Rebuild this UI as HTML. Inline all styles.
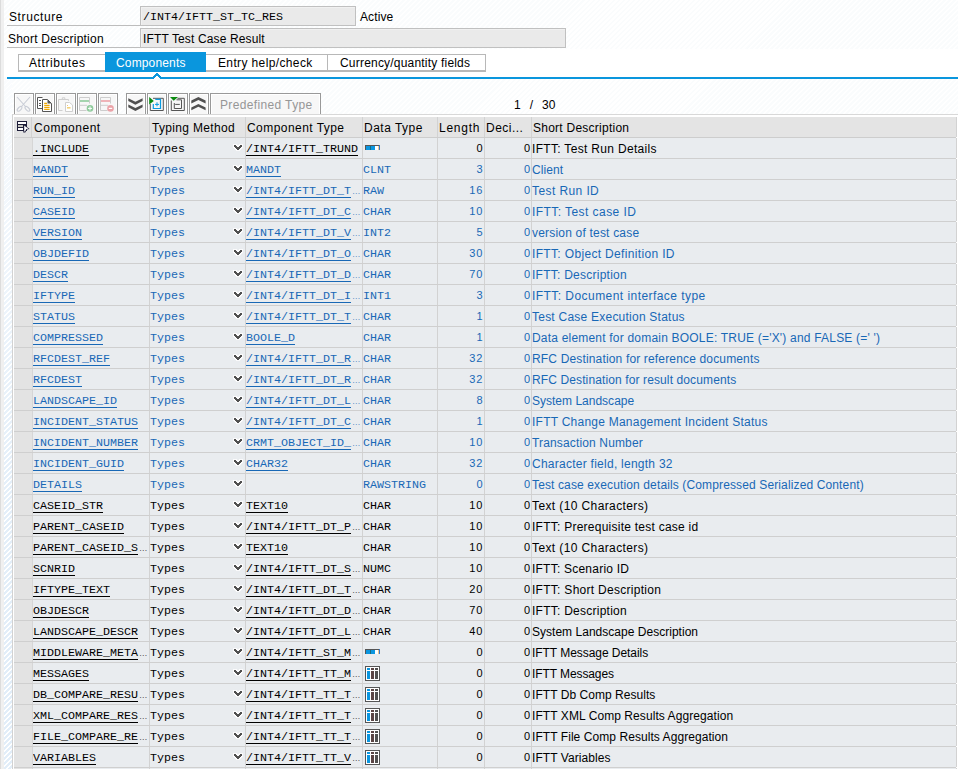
<!DOCTYPE html>
<html><head><meta charset="utf-8">
<style>
*{box-sizing:border-box;margin:0;padding:0}
html,body{width:958px;height:769px;overflow:hidden;background:#fff}
body{background:repeating-linear-gradient(135deg,#fff 0 1.6px,#fafcfd 1.6px 3.54px)}
.hatch{left:4px;top:80px;width:8px;height:689px;background:linear-gradient(to bottom,rgba(255,255,255,0.85) 0px,rgba(255,255,255,0.55) 120px,rgba(255,255,255,0.1) 400px,rgba(255,255,255,0) 600px),repeating-linear-gradient(135deg,#fff 0 1.3px,#e2eef9 1.3px 3.54px)}
body{position:relative;font-family:"Liberation Sans",sans-serif;font-size:12px;color:#000}
.a{position:absolute;white-space:nowrap}
.m{font-family:"Liberation Mono",monospace;font-size:11.67px}
.lstrip{left:0;top:0;width:1px;height:769px;background:#dcdcdc}
.lstrip2{left:1px;top:0;width:3px;height:769px;background:#f0f0f0}
.lbl{font-size:12px;letter-spacing:0.1px;line-height:20px}
.uline{height:1px;background:#bdbdbd}
.inp{background:#eaeaea;border:1px solid #c0c0c0;box-shadow:inset 1px 1px 0 #f1f1f1;line-height:18px;padding-left:2px}
.tab{top:54px;height:18px;border:1px solid #b8b8b8;border-bottom:2px solid #b8b8b8;background:#fff;line-height:15px;text-align:center;letter-spacing:0.1px}
.tab.on{top:52px;height:20px;background:#0a96dd;color:#fff;border:none;line-height:20px}
.bluel{left:7px;top:77px;width:951px;height:2px;background:#0a96dd}
.btn{top:93px;width:20px;height:21px;border:1px solid #999;border-bottom:none;background:#f7f7f7;box-shadow:inset 1px 1px 0 #fff,inset -1px 0 0 #fff}
.btn svg{position:absolute;left:2px;top:2px}
.frame{left:12px;top:114px;width:946px;height:655px;background:#fff;border-left:1px solid #d2d2d2;border-top:1px solid #d8d8d8}
.hdr{top:117px;left:14px;width:942px;height:21px;background:#e4e4e4;border-bottom:1px solid #cdcdcd}
.hc{position:absolute;top:0;height:20px;line-height:20px;padding-left:3px;letter-spacing:0.15px;border-right:1px solid #d2d2d2}
.row{position:absolute;left:14px;width:942px;height:21px;background:#e9ecef;border-bottom:1px solid #cfcfcf}
.c{position:absolute;top:0;height:20px;line-height:22px;white-space:nowrap;overflow:hidden;border-right:1px solid #d2d2d2}
.c0{left:0;width:19px;background:#e3e3e3;border-right:1px solid #d6d6d6}
.c1{left:19px;width:117px;padding-left:0px}
.c2{left:136px;width:96px;padding-left:0px}
.c3{left:232px;width:117px;padding-left:0px}
.c4{left:349px;width:75px;padding-left:0px}
.c5{left:424px;width:47px;text-align:right;padding-right:0.5px;letter-spacing:1px}
.c6{left:471px;width:47px;text-align:right;padding-right:1px}
.c7{left:518px;width:425px;padding-left:0px}
.n{font-size:11px;line-height:20px}
.t{display:inline-block;transform:none;transform-origin:0 14px}
.u{position:absolute;left:0;top:17px;height:1px;background:currentColor}
.ell{font-family:"Liberation Sans",sans-serif;font-size:8.5px;letter-spacing:-0.6px;margin-left:1px;display:inline-block;transform:scaleY(0.88)}
.chev{position:absolute;left:83px;top:6px}
.blue{color:#1868b6}
.ic{position:absolute;left:2px;top:7px}
.ict{position:absolute;left:2px;top:3px}
</style></head><body>
<div class="a" style="left:0;top:49px;width:958px;height:28px;background:#fff"></div>
<div class="a lstrip"></div><div class="a lstrip2"></div><div class="a hatch"></div>

<div class="a lbl" style="left:9px;top:7px;letter-spacing:0.6px">Structure</div>
<div class="a uline" style="left:7px;top:25px;width:134px"></div>
<div class="a inp" style="left:140px;top:6px;width:216px;height:20px"></div>
<div class="a m" style="left:143px;top:7px;line-height:20px">/INT4/IFTT_ST_TC_RES</div>
<div class="a lbl" style="left:360px;top:7px;letter-spacing:0.1px">Active</div>

<div class="a lbl" style="left:8px;top:29px;letter-spacing:0.22px">Short Description</div>
<div class="a uline" style="left:7px;top:47px;width:134px"></div>
<div class="a inp" style="left:140px;top:28px;width:426px;height:20px"></div>
<div class="a lbl" style="left:143px;top:29px;letter-spacing:0.135px">IFTT Test Case Result</div>

<div class="a tab" style="left:18px;width:88px"></div>
<div class="a tab on" style="left:105px;width:101px"></div>
<div class="a tab" style="left:206px;width:122px;border-left:none"></div>
<div class="a tab" style="left:327px;width:159px"></div>
<div class="a lbl" style="left:29px;top:53px;letter-spacing:0.58px">Attributes</div>
<div class="a lbl" style="left:116px;top:53px;letter-spacing:0.15px;color:#fff">Components</div>
<div class="a lbl" style="left:218px;top:53px;letter-spacing:0.37px">Entry help/check</div>
<div class="a lbl" style="left:340px;top:53px;letter-spacing:0.2px">Currency/quantity fields</div>
<div class="a bluel"></div>
<svg class="a" style="left:150px;top:70px" width="14" height="10" viewBox="150 70 14 10" shape-rendering="crispEdges"><rect x="154" y="77" width="6" height="2" fill="#fff"/><rect x="156" y="73" width="2" height="2" fill="#0a96dd"/><rect x="155" y="74" width="2" height="2" fill="#0a96dd"/><rect x="154" y="75" width="2" height="2" fill="#0a96dd"/><rect x="153" y="76" width="2" height="2" fill="#0a96dd"/><rect x="157" y="74" width="2" height="2" fill="#0a96dd"/><rect x="158" y="75" width="2" height="2" fill="#0a96dd"/><rect x="159" y="76" width="2" height="2" fill="#0a96dd"/></svg>

<div class="a frame"></div>
<div class="a hdr">
<div class="hc" style="left:0;width:18px;background:#e3e3e3"></div>
<div class="hc" style="left:18px;width:118px"></div>
<div class="hc" style="left:136px;width:96px"></div>
<div class="hc" style="left:232px;width:117px"></div>
<div class="hc" style="left:349px;width:75px"></div>
<div class="hc" style="left:424px;width:47px"></div>
<div class="hc" style="left:471px;width:47px"></div>
<div class="hc" style="left:518px;width:425px"></div>
</div>
<svg class="a" style="left:14px;top:118px" width="18" height="18" viewBox="0 0 18 18"><g shape-rendering="crispEdges"><rect x="3" y="3" width="10" height="10" fill="#1e1e3a"/><rect x="4" y="4" width="8" height="2" fill="#fff"/><rect x="4" y="7" width="5" height="2" fill="#c9c9c2"/><rect x="4" y="10" width="5" height="2" fill="#fff"/></g><path d="M9.3 6.2L15.6 11L12.9 11.6L11.3 14.4H9.3Z" fill="#1e1e3a"/><path d="M10.2 7.6L14.4 10.7L12.4 11.1L11 13.5H10.2Z" fill="#fff"/></svg>
<div class="a lbl" style="left:34px;top:118px;letter-spacing:0.52px">Component</div>
<div class="a lbl" style="left:152px;top:118px;letter-spacing:0.32px">Typing Method</div>
<div class="a lbl" style="left:247px;top:118px;letter-spacing:0.45px">Component Type</div>
<div class="a lbl" style="left:364px;top:118px;letter-spacing:0.49px">Data Type</div>
<div class="a lbl" style="left:439px;top:118px;letter-spacing:0.75px">Length</div>
<div class="a lbl" style="left:486px;top:118px;letter-spacing:0.49px">Deci...</div>
<div class="a lbl" style="left:533px;top:118px;letter-spacing:0.25px">Short Description</div>

<div class="a btn" style="left:14px"></div>
<svg class="a" style="left:14px;top:92px" width="22" height="22" viewBox="0 0 22 22"><path d="M3 5L11.5 14.5M16 5L7.5 14.5" stroke="#c9cdd6" stroke-width="1.1" fill="none"/><ellipse cx="5.6" cy="16.8" rx="1.5" ry="3" transform="rotate(45 5.6 16.8)" fill="none" stroke="#c9cdd6" stroke-width="1.1"/><ellipse cx="13.4" cy="16.8" rx="1.5" ry="3" transform="rotate(-45 13.4 16.8)" fill="none" stroke="#c9cdd6" stroke-width="1.1"/></svg>
<div class="a btn" style="left:35px"></div>
<svg class="a" style="left:35px;top:92px" width="22" height="22" viewBox="0 0 22 22"><path d="M7.5 5.5H2.5V16.5H7.5" fill="#fff" stroke="#555" stroke-width="1"/><path d="M4 8.5H6M4 11.5H6M4 13.5H6" stroke="#555" stroke-width="1"/><path d="M7.5 7.5H12.5L16.5 11.5V19.5H7.5Z" fill="#fff" stroke="#555" stroke-width="1"/><path d="M12.5 7.5L16.5 11.5H12.5Z" fill="#555"/><path d="M9.2 11.4H12M9.2 13.4H14.6M9.2 15.4H14.6M9.2 17.4H14.6" stroke="#f0a800" stroke-width="1.2"/></svg>
<div class="a btn" style="left:56px"></div>
<svg class="a" style="left:56px;top:92px" width="22" height="22" viewBox="0 0 22 22"><path d="M6.5 18.5H2.5V7.5H12.5V8.8" fill="none" stroke="#cfcfcf" stroke-width="1"/><path d="M6.3 7V5.8H8.8V7" fill="none" stroke="#cfcfcf" stroke-width="1"/><path d="M9.5 10.5H13.5L16.5 13V19.5H9.5Z" fill="#fff" stroke="#cfcfcf" stroke-width="1"/><path d="M11 15.8H14.5" stroke="#f3d27a" stroke-width="1.6"/><rect x="11" y="13" width="1" height="1" fill="#f3c870"/></svg>
<div class="a btn" style="left:77px"></div>
<svg class="a" style="left:77px;top:92px" width="22" height="22" viewBox="0 0 22 22"><path d="M12.5 11.5V5.5H2.5V18.5H9.5" fill="none" stroke="#cdcdcd" stroke-width="1"/><path d="M3 9H12" stroke="#8fcb9c" stroke-width="1.6"/><path d="M3 13.3H10" stroke="#cdcdcd" stroke-width="1"/><circle cx="13" cy="16.4" r="3.3" fill="#8fcb9c"/><path d="M11 16.4H15M13 14.4V18.4" stroke="#fff" stroke-width="1"/></svg>
<div class="a btn" style="left:98px"></div>
<svg class="a" style="left:98px;top:92px" width="22" height="22" viewBox="0 0 22 22"><path d="M12.5 11.5V5.5H2.5V18.5H9.5" fill="none" stroke="#cdcdcd" stroke-width="1"/><path d="M3 9H12" stroke="#eba3a8" stroke-width="1.6"/><path d="M3 13.3H10" stroke="#cdcdcd" stroke-width="1"/><circle cx="12.5" cy="16.4" r="3.3" fill="#eba3a8"/><path d="M10.8 16.4H14.2" stroke="#fff" stroke-width="1.2"/></svg>
<div class="a btn" style="left:126px"></div>
<svg class="a" style="left:126px;top:92px" width="22" height="22" viewBox="0 0 22 22"><path d="M2.3 6.2L9.4 9.8L16.6 6.2V9.1L9.4 12.7L2.3 9.1Z" fill="#505050"/><path d="M2.3 12.4L9.4 16L16.6 12.4V15.3L9.4 18.9L2.3 15.3Z" fill="#505050"/></svg>
<div class="a btn" style="left:147px"></div>
<svg class="a" style="left:147px;top:92px" width="22" height="22" viewBox="0 0 22 22"><path d="M6 6.3H16.3V18.5H3.3V12" fill="none" stroke="#555" stroke-width="1"/><path d="M8.3 7.3H13.5V16.5H6.3V12" fill="none" stroke="#0a9be0" stroke-width="1.2"/><path d="M8 12.4H12M10 10.3V14.3" stroke="#0a9be0" stroke-width="1"/><path d="M2.2 5L6.8 8.9L2.2 12.6Z" fill="#0a8a10"/></svg>
<div class="a btn" style="left:168px"></div>
<svg class="a" style="left:168px;top:92px" width="22" height="22" viewBox="0 0 22 22"><path d="M9.5 6.3H16.3V18.5H3.3V8.5" fill="none" stroke="#555" stroke-width="1"/><path d="M8.5 7.8H13.5V16.5H6.3V11" fill="none" stroke="#555" stroke-width="1"/><path d="M7.2 12.4H11.8" stroke="#555" stroke-width="1"/><path d="M2 5H10L5.7 8.8Z" fill="#0a8a10"/></svg>
<div class="a btn" style="left:189px"></div>
<svg class="a" style="left:189px;top:92px" width="22" height="22" viewBox="0 0 22 22"><path d="M2.3 8.6L9.4 5.1L16.6 8.6V11.5L9.4 8L2.3 11.5Z" fill="#505050"/><path d="M2.3 15.4L9.4 11.9L16.6 15.4V18.3L9.4 14.8L2.3 18.3Z" fill="#505050"/></svg>
<div class="a btn" style="left:210px;width:111px"></div>
<div class="a lbl" style="left:220px;top:95px;color:#969696;letter-spacing:0.36px">Predefined Type</div>
<div class="a lbl" style="left:514px;top:95px;word-spacing:5.5px">1 / 30</div>

<div class="row" style="top:138px">
<div class="c c0"></div><div class="c c1 m"><span class="t">.INCLUDE</span><i class="u" style="width:56px"></i></div><div class="c c2 m"><span class="t">Types</span><svg class="chev" width="10" height="8" viewBox="0 0 10 8" shape-rendering="crispEdges"><g fill="#fff" fill-opacity="0.8"><rect x="0" y="0" width="4" height="4"/><rect x="6" y="0" width="4" height="4"/><rect x="1" y="1" width="4" height="4"/><rect x="5" y="1" width="4" height="4"/><rect x="2" y="2" width="6" height="4"/><rect x="3" y="3" width="4" height="4"/></g><g fill="#505050"><rect x="1" y="1" width="2" height="2"/><rect x="7" y="1" width="2" height="2"/><rect x="2" y="2" width="2" height="2"/><rect x="6" y="2" width="2" height="2"/><rect x="3" y="3" width="4" height="2"/><rect x="4" y="4" width="2" height="2"/></g></svg></div><div class="c c3 m"><span class="t">/INT4/IFTT_TRUND</span><i class="u" style="width:112px"></i></div><div class="c c4 m"><svg class="ic" width="15" height="5" viewBox="0 0 15 5" shape-rendering="crispEdges"><rect x="0" y="0" width="15" height="5" fill="#555"/><rect x="1" y="1" width="4" height="4" fill="#0a96e0"/><rect x="5" y="1" width="1" height="4" fill="#1a6a80"/><rect x="6" y="1" width="4" height="4" fill="#0a96e0"/><rect x="10" y="1" width="3" height="4" fill="#fff"/><rect x="13" y="1" width="1" height="4" fill="#e8c890"/><rect x="14" y="0" width="1" height="5" fill="#3a7ac8"/></svg></div><div class="c c5 n">0</div><div class="c c6 n">0</div><div class="c c7 s" style="letter-spacing:0.319px">IFTT: Test Run Details</div>
</div>
<div class="row blue" style="top:159px">
<div class="c c0"></div><div class="c c1 m"><span class="t">MANDT</span><i class="u" style="width:35px"></i></div><div class="c c2 m"><span class="t">Types</span><svg class="chev" width="10" height="8" viewBox="0 0 10 8" shape-rendering="crispEdges"><g fill="#fff" fill-opacity="0.8"><rect x="0" y="0" width="4" height="4"/><rect x="6" y="0" width="4" height="4"/><rect x="1" y="1" width="4" height="4"/><rect x="5" y="1" width="4" height="4"/><rect x="2" y="2" width="6" height="4"/><rect x="3" y="3" width="4" height="4"/></g><g fill="#505050"><rect x="1" y="1" width="2" height="2"/><rect x="7" y="1" width="2" height="2"/><rect x="2" y="2" width="2" height="2"/><rect x="6" y="2" width="2" height="2"/><rect x="3" y="3" width="4" height="2"/><rect x="4" y="4" width="2" height="2"/></g></svg></div><div class="c c3 m"><span class="t">MANDT</span><i class="u" style="width:35px"></i></div><div class="c c4 m"><span class="t">CLNT</span></div><div class="c c5 n">3</div><div class="c c6 n">0</div><div class="c c7 s" style="letter-spacing:0.08px">Client</div>
</div>
<div class="row blue" style="top:180px">
<div class="c c0"></div><div class="c c1 m"><span class="t">RUN_ID</span><i class="u" style="width:42px"></i></div><div class="c c2 m"><span class="t">Types</span><svg class="chev" width="10" height="8" viewBox="0 0 10 8" shape-rendering="crispEdges"><g fill="#fff" fill-opacity="0.8"><rect x="0" y="0" width="4" height="4"/><rect x="6" y="0" width="4" height="4"/><rect x="1" y="1" width="4" height="4"/><rect x="5" y="1" width="4" height="4"/><rect x="2" y="2" width="6" height="4"/><rect x="3" y="3" width="4" height="4"/></g><g fill="#505050"><rect x="1" y="1" width="2" height="2"/><rect x="7" y="1" width="2" height="2"/><rect x="2" y="2" width="2" height="2"/><rect x="6" y="2" width="2" height="2"/><rect x="3" y="3" width="4" height="2"/><rect x="4" y="4" width="2" height="2"/></g></svg></div><div class="c c3 m"><span class="t">/INT4/IFTT_DT_T<span class="ell">…</span></span><i class="u" style="width:105px"></i></div><div class="c c4 m"><span class="t">RAW</span></div><div class="c c5 n">16</div><div class="c c6 n">0</div><div class="c c7 s" style="letter-spacing:0.41px">Test Run ID</div>
</div>
<div class="row blue" style="top:201px">
<div class="c c0"></div><div class="c c1 m"><span class="t">CASEID</span><i class="u" style="width:42px"></i></div><div class="c c2 m"><span class="t">Types</span><svg class="chev" width="10" height="8" viewBox="0 0 10 8" shape-rendering="crispEdges"><g fill="#fff" fill-opacity="0.8"><rect x="0" y="0" width="4" height="4"/><rect x="6" y="0" width="4" height="4"/><rect x="1" y="1" width="4" height="4"/><rect x="5" y="1" width="4" height="4"/><rect x="2" y="2" width="6" height="4"/><rect x="3" y="3" width="4" height="4"/></g><g fill="#505050"><rect x="1" y="1" width="2" height="2"/><rect x="7" y="1" width="2" height="2"/><rect x="2" y="2" width="2" height="2"/><rect x="6" y="2" width="2" height="2"/><rect x="3" y="3" width="4" height="2"/><rect x="4" y="4" width="2" height="2"/></g></svg></div><div class="c c3 m"><span class="t">/INT4/IFTT_DT_C<span class="ell">…</span></span><i class="u" style="width:105px"></i></div><div class="c c4 m"><span class="t">CHAR</span></div><div class="c c5 n">10</div><div class="c c6 n">0</div><div class="c c7 s" style="letter-spacing:0.436px">IFTT: Test case ID</div>
</div>
<div class="row blue" style="top:222px">
<div class="c c0"></div><div class="c c1 m"><span class="t">VERSION</span><i class="u" style="width:49px"></i></div><div class="c c2 m"><span class="t">Types</span><svg class="chev" width="10" height="8" viewBox="0 0 10 8" shape-rendering="crispEdges"><g fill="#fff" fill-opacity="0.8"><rect x="0" y="0" width="4" height="4"/><rect x="6" y="0" width="4" height="4"/><rect x="1" y="1" width="4" height="4"/><rect x="5" y="1" width="4" height="4"/><rect x="2" y="2" width="6" height="4"/><rect x="3" y="3" width="4" height="4"/></g><g fill="#505050"><rect x="1" y="1" width="2" height="2"/><rect x="7" y="1" width="2" height="2"/><rect x="2" y="2" width="2" height="2"/><rect x="6" y="2" width="2" height="2"/><rect x="3" y="3" width="4" height="2"/><rect x="4" y="4" width="2" height="2"/></g></svg></div><div class="c c3 m"><span class="t">/INT4/IFTT_DT_V<span class="ell">…</span></span><i class="u" style="width:105px"></i></div><div class="c c4 m"><span class="t">INT2</span></div><div class="c c5 n">5</div><div class="c c6 n">0</div><div class="c c7 s" style="letter-spacing:0.195px">version of test case</div>
</div>
<div class="row blue" style="top:243px">
<div class="c c0"></div><div class="c c1 m"><span class="t">OBJDEFID</span><i class="u" style="width:56px"></i></div><div class="c c2 m"><span class="t">Types</span><svg class="chev" width="10" height="8" viewBox="0 0 10 8" shape-rendering="crispEdges"><g fill="#fff" fill-opacity="0.8"><rect x="0" y="0" width="4" height="4"/><rect x="6" y="0" width="4" height="4"/><rect x="1" y="1" width="4" height="4"/><rect x="5" y="1" width="4" height="4"/><rect x="2" y="2" width="6" height="4"/><rect x="3" y="3" width="4" height="4"/></g><g fill="#505050"><rect x="1" y="1" width="2" height="2"/><rect x="7" y="1" width="2" height="2"/><rect x="2" y="2" width="2" height="2"/><rect x="6" y="2" width="2" height="2"/><rect x="3" y="3" width="4" height="2"/><rect x="4" y="4" width="2" height="2"/></g></svg></div><div class="c c3 m"><span class="t">/INT4/IFTT_DT_O<span class="ell">…</span></span><i class="u" style="width:105px"></i></div><div class="c c4 m"><span class="t">CHAR</span></div><div class="c c5 n">30</div><div class="c c6 n">0</div><div class="c c7 s" style="letter-spacing:0.34px">IFTT: Object Definition ID</div>
</div>
<div class="row blue" style="top:264px">
<div class="c c0"></div><div class="c c1 m"><span class="t">DESCR</span><i class="u" style="width:35px"></i></div><div class="c c2 m"><span class="t">Types</span><svg class="chev" width="10" height="8" viewBox="0 0 10 8" shape-rendering="crispEdges"><g fill="#fff" fill-opacity="0.8"><rect x="0" y="0" width="4" height="4"/><rect x="6" y="0" width="4" height="4"/><rect x="1" y="1" width="4" height="4"/><rect x="5" y="1" width="4" height="4"/><rect x="2" y="2" width="6" height="4"/><rect x="3" y="3" width="4" height="4"/></g><g fill="#505050"><rect x="1" y="1" width="2" height="2"/><rect x="7" y="1" width="2" height="2"/><rect x="2" y="2" width="2" height="2"/><rect x="6" y="2" width="2" height="2"/><rect x="3" y="3" width="4" height="2"/><rect x="4" y="4" width="2" height="2"/></g></svg></div><div class="c c3 m"><span class="t">/INT4/IFTT_DT_D<span class="ell">…</span></span><i class="u" style="width:105px"></i></div><div class="c c4 m"><span class="t">CHAR</span></div><div class="c c5 n">70</div><div class="c c6 n">0</div><div class="c c7 s" style="letter-spacing:0.251px">IFTT: Description</div>
</div>
<div class="row blue" style="top:285px">
<div class="c c0"></div><div class="c c1 m"><span class="t">IFTYPE</span><i class="u" style="width:42px"></i></div><div class="c c2 m"><span class="t">Types</span><svg class="chev" width="10" height="8" viewBox="0 0 10 8" shape-rendering="crispEdges"><g fill="#fff" fill-opacity="0.8"><rect x="0" y="0" width="4" height="4"/><rect x="6" y="0" width="4" height="4"/><rect x="1" y="1" width="4" height="4"/><rect x="5" y="1" width="4" height="4"/><rect x="2" y="2" width="6" height="4"/><rect x="3" y="3" width="4" height="4"/></g><g fill="#505050"><rect x="1" y="1" width="2" height="2"/><rect x="7" y="1" width="2" height="2"/><rect x="2" y="2" width="2" height="2"/><rect x="6" y="2" width="2" height="2"/><rect x="3" y="3" width="4" height="2"/><rect x="4" y="4" width="2" height="2"/></g></svg></div><div class="c c3 m"><span class="t">/INT4/IFTT_DT_I<span class="ell">…</span></span><i class="u" style="width:105px"></i></div><div class="c c4 m"><span class="t">INT1</span></div><div class="c c5 n">3</div><div class="c c6 n">0</div><div class="c c7 s" style="letter-spacing:0.447px">IFTT: Document interface type</div>
</div>
<div class="row blue" style="top:306px">
<div class="c c0"></div><div class="c c1 m"><span class="t">STATUS</span><i class="u" style="width:42px"></i></div><div class="c c2 m"><span class="t">Types</span><svg class="chev" width="10" height="8" viewBox="0 0 10 8" shape-rendering="crispEdges"><g fill="#fff" fill-opacity="0.8"><rect x="0" y="0" width="4" height="4"/><rect x="6" y="0" width="4" height="4"/><rect x="1" y="1" width="4" height="4"/><rect x="5" y="1" width="4" height="4"/><rect x="2" y="2" width="6" height="4"/><rect x="3" y="3" width="4" height="4"/></g><g fill="#505050"><rect x="1" y="1" width="2" height="2"/><rect x="7" y="1" width="2" height="2"/><rect x="2" y="2" width="2" height="2"/><rect x="6" y="2" width="2" height="2"/><rect x="3" y="3" width="4" height="2"/><rect x="4" y="4" width="2" height="2"/></g></svg></div><div class="c c3 m"><span class="t">/INT4/IFTT_DT_T<span class="ell">…</span></span><i class="u" style="width:105px"></i></div><div class="c c4 m"><span class="t">CHAR</span></div><div class="c c5 n">1</div><div class="c c6 n">0</div><div class="c c7 s" style="letter-spacing:0.232px">Test Case Execution Status</div>
</div>
<div class="row blue" style="top:327px">
<div class="c c0"></div><div class="c c1 m"><span class="t">COMPRESSED</span><i class="u" style="width:70px"></i></div><div class="c c2 m"><span class="t">Types</span><svg class="chev" width="10" height="8" viewBox="0 0 10 8" shape-rendering="crispEdges"><g fill="#fff" fill-opacity="0.8"><rect x="0" y="0" width="4" height="4"/><rect x="6" y="0" width="4" height="4"/><rect x="1" y="1" width="4" height="4"/><rect x="5" y="1" width="4" height="4"/><rect x="2" y="2" width="6" height="4"/><rect x="3" y="3" width="4" height="4"/></g><g fill="#505050"><rect x="1" y="1" width="2" height="2"/><rect x="7" y="1" width="2" height="2"/><rect x="2" y="2" width="2" height="2"/><rect x="6" y="2" width="2" height="2"/><rect x="3" y="3" width="4" height="2"/><rect x="4" y="4" width="2" height="2"/></g></svg></div><div class="c c3 m"><span class="t">BOOLE_D</span><i class="u" style="width:49px"></i></div><div class="c c4 m"><span class="t">CHAR</span></div><div class="c c5 n">1</div><div class="c c6 n">0</div><div class="c c7 s" style="letter-spacing:0.2px">Data element for domain BOOLE: TRUE (=&#x27;X&#x27;) and FALSE (=&#x27; &#x27;)</div>
</div>
<div class="row blue" style="top:348px">
<div class="c c0"></div><div class="c c1 m"><span class="t">RFCDEST_REF</span><i class="u" style="width:77px"></i></div><div class="c c2 m"><span class="t">Types</span><svg class="chev" width="10" height="8" viewBox="0 0 10 8" shape-rendering="crispEdges"><g fill="#fff" fill-opacity="0.8"><rect x="0" y="0" width="4" height="4"/><rect x="6" y="0" width="4" height="4"/><rect x="1" y="1" width="4" height="4"/><rect x="5" y="1" width="4" height="4"/><rect x="2" y="2" width="6" height="4"/><rect x="3" y="3" width="4" height="4"/></g><g fill="#505050"><rect x="1" y="1" width="2" height="2"/><rect x="7" y="1" width="2" height="2"/><rect x="2" y="2" width="2" height="2"/><rect x="6" y="2" width="2" height="2"/><rect x="3" y="3" width="4" height="2"/><rect x="4" y="4" width="2" height="2"/></g></svg></div><div class="c c3 m"><span class="t">/INT4/IFTT_DT_R<span class="ell">…</span></span><i class="u" style="width:105px"></i></div><div class="c c4 m"><span class="t">CHAR</span></div><div class="c c5 n">32</div><div class="c c6 n">0</div><div class="c c7 s" style="letter-spacing:0.158px">RFC Destination for reference documents</div>
</div>
<div class="row blue" style="top:369px">
<div class="c c0"></div><div class="c c1 m"><span class="t">RFCDEST</span><i class="u" style="width:49px"></i></div><div class="c c2 m"><span class="t">Types</span><svg class="chev" width="10" height="8" viewBox="0 0 10 8" shape-rendering="crispEdges"><g fill="#fff" fill-opacity="0.8"><rect x="0" y="0" width="4" height="4"/><rect x="6" y="0" width="4" height="4"/><rect x="1" y="1" width="4" height="4"/><rect x="5" y="1" width="4" height="4"/><rect x="2" y="2" width="6" height="4"/><rect x="3" y="3" width="4" height="4"/></g><g fill="#505050"><rect x="1" y="1" width="2" height="2"/><rect x="7" y="1" width="2" height="2"/><rect x="2" y="2" width="2" height="2"/><rect x="6" y="2" width="2" height="2"/><rect x="3" y="3" width="4" height="2"/><rect x="4" y="4" width="2" height="2"/></g></svg></div><div class="c c3 m"><span class="t">/INT4/IFTT_DT_R<span class="ell">…</span></span><i class="u" style="width:105px"></i></div><div class="c c4 m"><span class="t">CHAR</span></div><div class="c c5 n">32</div><div class="c c6 n">0</div><div class="c c7 s" style="letter-spacing:0.117px">RFC Destination for result documents</div>
</div>
<div class="row blue" style="top:390px">
<div class="c c0"></div><div class="c c1 m"><span class="t">LANDSCAPE_ID</span><i class="u" style="width:84px"></i></div><div class="c c2 m"><span class="t">Types</span><svg class="chev" width="10" height="8" viewBox="0 0 10 8" shape-rendering="crispEdges"><g fill="#fff" fill-opacity="0.8"><rect x="0" y="0" width="4" height="4"/><rect x="6" y="0" width="4" height="4"/><rect x="1" y="1" width="4" height="4"/><rect x="5" y="1" width="4" height="4"/><rect x="2" y="2" width="6" height="4"/><rect x="3" y="3" width="4" height="4"/></g><g fill="#505050"><rect x="1" y="1" width="2" height="2"/><rect x="7" y="1" width="2" height="2"/><rect x="2" y="2" width="2" height="2"/><rect x="6" y="2" width="2" height="2"/><rect x="3" y="3" width="4" height="2"/><rect x="4" y="4" width="2" height="2"/></g></svg></div><div class="c c3 m"><span class="t">/INT4/IFTT_DT_L<span class="ell">…</span></span><i class="u" style="width:105px"></i></div><div class="c c4 m"><span class="t">CHAR</span></div><div class="c c5 n">8</div><div class="c c6 n">0</div><div class="c c7 s" style="letter-spacing:0.007px">System Landscape</div>
</div>
<div class="row blue" style="top:411px">
<div class="c c0"></div><div class="c c1 m"><span class="t">INCIDENT_STATUS</span><i class="u" style="width:105px"></i></div><div class="c c2 m"><span class="t">Types</span><svg class="chev" width="10" height="8" viewBox="0 0 10 8" shape-rendering="crispEdges"><g fill="#fff" fill-opacity="0.8"><rect x="0" y="0" width="4" height="4"/><rect x="6" y="0" width="4" height="4"/><rect x="1" y="1" width="4" height="4"/><rect x="5" y="1" width="4" height="4"/><rect x="2" y="2" width="6" height="4"/><rect x="3" y="3" width="4" height="4"/></g><g fill="#505050"><rect x="1" y="1" width="2" height="2"/><rect x="7" y="1" width="2" height="2"/><rect x="2" y="2" width="2" height="2"/><rect x="6" y="2" width="2" height="2"/><rect x="3" y="3" width="4" height="2"/><rect x="4" y="4" width="2" height="2"/></g></svg></div><div class="c c3 m"><span class="t">/INT4/IFTT_DT_C<span class="ell">…</span></span><i class="u" style="width:105px"></i></div><div class="c c4 m"><span class="t">CHAR</span></div><div class="c c5 n">1</div><div class="c c6 n">0</div><div class="c c7 s" style="letter-spacing:0.241px">IFTT Change Management Incident Status</div>
</div>
<div class="row blue" style="top:432px">
<div class="c c0"></div><div class="c c1 m"><span class="t">INCIDENT_NUMBER</span><i class="u" style="width:105px"></i></div><div class="c c2 m"><span class="t">Types</span><svg class="chev" width="10" height="8" viewBox="0 0 10 8" shape-rendering="crispEdges"><g fill="#fff" fill-opacity="0.8"><rect x="0" y="0" width="4" height="4"/><rect x="6" y="0" width="4" height="4"/><rect x="1" y="1" width="4" height="4"/><rect x="5" y="1" width="4" height="4"/><rect x="2" y="2" width="6" height="4"/><rect x="3" y="3" width="4" height="4"/></g><g fill="#505050"><rect x="1" y="1" width="2" height="2"/><rect x="7" y="1" width="2" height="2"/><rect x="2" y="2" width="2" height="2"/><rect x="6" y="2" width="2" height="2"/><rect x="3" y="3" width="4" height="2"/><rect x="4" y="4" width="2" height="2"/></g></svg></div><div class="c c3 m"><span class="t">CRMT_OBJECT_ID_<span class="ell">…</span></span><i class="u" style="width:105px"></i></div><div class="c c4 m"><span class="t">CHAR</span></div><div class="c c5 n">10</div><div class="c c6 n">0</div><div class="c c7 s" style="letter-spacing:0.147px">Transaction Number</div>
</div>
<div class="row blue" style="top:453px">
<div class="c c0"></div><div class="c c1 m"><span class="t">INCIDENT_GUID</span><i class="u" style="width:91px"></i></div><div class="c c2 m"><span class="t">Types</span><svg class="chev" width="10" height="8" viewBox="0 0 10 8" shape-rendering="crispEdges"><g fill="#fff" fill-opacity="0.8"><rect x="0" y="0" width="4" height="4"/><rect x="6" y="0" width="4" height="4"/><rect x="1" y="1" width="4" height="4"/><rect x="5" y="1" width="4" height="4"/><rect x="2" y="2" width="6" height="4"/><rect x="3" y="3" width="4" height="4"/></g><g fill="#505050"><rect x="1" y="1" width="2" height="2"/><rect x="7" y="1" width="2" height="2"/><rect x="2" y="2" width="2" height="2"/><rect x="6" y="2" width="2" height="2"/><rect x="3" y="3" width="4" height="2"/><rect x="4" y="4" width="2" height="2"/></g></svg></div><div class="c c3 m"><span class="t">CHAR32</span><i class="u" style="width:42px"></i></div><div class="c c4 m"><span class="t">CHAR</span></div><div class="c c5 n">32</div><div class="c c6 n">0</div><div class="c c7 s" style="letter-spacing:0.256px">Character field, length 32</div>
</div>
<div class="row blue" style="top:474px">
<div class="c c0"></div><div class="c c1 m"><span class="t">DETAILS</span><i class="u" style="width:49px"></i></div><div class="c c2 m"><span class="t">Types</span><svg class="chev" width="10" height="8" viewBox="0 0 10 8" shape-rendering="crispEdges"><g fill="#fff" fill-opacity="0.8"><rect x="0" y="0" width="4" height="4"/><rect x="6" y="0" width="4" height="4"/><rect x="1" y="1" width="4" height="4"/><rect x="5" y="1" width="4" height="4"/><rect x="2" y="2" width="6" height="4"/><rect x="3" y="3" width="4" height="4"/></g><g fill="#505050"><rect x="1" y="1" width="2" height="2"/><rect x="7" y="1" width="2" height="2"/><rect x="2" y="2" width="2" height="2"/><rect x="6" y="2" width="2" height="2"/><rect x="3" y="3" width="4" height="2"/><rect x="4" y="4" width="2" height="2"/></g></svg></div><div class="c c3 m"></div><div class="c c4 m"><span class="t">RAWSTRING</span></div><div class="c c5 n">0</div><div class="c c6 n">0</div><div class="c c7 s" style="letter-spacing:0.129px">Test case execution details (Compressed Serialized Content)</div>
</div>
<div class="row" style="top:495px">
<div class="c c0"></div><div class="c c1 m"><span class="t">CASEID_STR</span><i class="u" style="width:70px"></i></div><div class="c c2 m"><span class="t">Types</span><svg class="chev" width="10" height="8" viewBox="0 0 10 8" shape-rendering="crispEdges"><g fill="#fff" fill-opacity="0.8"><rect x="0" y="0" width="4" height="4"/><rect x="6" y="0" width="4" height="4"/><rect x="1" y="1" width="4" height="4"/><rect x="5" y="1" width="4" height="4"/><rect x="2" y="2" width="6" height="4"/><rect x="3" y="3" width="4" height="4"/></g><g fill="#505050"><rect x="1" y="1" width="2" height="2"/><rect x="7" y="1" width="2" height="2"/><rect x="2" y="2" width="2" height="2"/><rect x="6" y="2" width="2" height="2"/><rect x="3" y="3" width="4" height="2"/><rect x="4" y="4" width="2" height="2"/></g></svg></div><div class="c c3 m"><span class="t">TEXT10</span><i class="u" style="width:42px"></i></div><div class="c c4 m"><span class="t">CHAR</span></div><div class="c c5 n">10</div><div class="c c6 n">0</div><div class="c c7 s" style="letter-spacing:0.389px">Text (10 Characters)</div>
</div>
<div class="row" style="top:516px">
<div class="c c0"></div><div class="c c1 m"><span class="t">PARENT_CASEID</span><i class="u" style="width:91px"></i></div><div class="c c2 m"><span class="t">Types</span><svg class="chev" width="10" height="8" viewBox="0 0 10 8" shape-rendering="crispEdges"><g fill="#fff" fill-opacity="0.8"><rect x="0" y="0" width="4" height="4"/><rect x="6" y="0" width="4" height="4"/><rect x="1" y="1" width="4" height="4"/><rect x="5" y="1" width="4" height="4"/><rect x="2" y="2" width="6" height="4"/><rect x="3" y="3" width="4" height="4"/></g><g fill="#505050"><rect x="1" y="1" width="2" height="2"/><rect x="7" y="1" width="2" height="2"/><rect x="2" y="2" width="2" height="2"/><rect x="6" y="2" width="2" height="2"/><rect x="3" y="3" width="4" height="2"/><rect x="4" y="4" width="2" height="2"/></g></svg></div><div class="c c3 m"><span class="t">/INT4/IFTT_DT_P<span class="ell">…</span></span><i class="u" style="width:105px"></i></div><div class="c c4 m"><span class="t">CHAR</span></div><div class="c c5 n">10</div><div class="c c6 n">0</div><div class="c c7 s" style="letter-spacing:0.247px">IFTT: Prerequisite test case id</div>
</div>
<div class="row" style="top:537px">
<div class="c c0"></div><div class="c c1 m"><span class="t">PARENT_CASEID_S<span class="ell">…</span></span><i class="u" style="width:105px"></i></div><div class="c c2 m"><span class="t">Types</span><svg class="chev" width="10" height="8" viewBox="0 0 10 8" shape-rendering="crispEdges"><g fill="#fff" fill-opacity="0.8"><rect x="0" y="0" width="4" height="4"/><rect x="6" y="0" width="4" height="4"/><rect x="1" y="1" width="4" height="4"/><rect x="5" y="1" width="4" height="4"/><rect x="2" y="2" width="6" height="4"/><rect x="3" y="3" width="4" height="4"/></g><g fill="#505050"><rect x="1" y="1" width="2" height="2"/><rect x="7" y="1" width="2" height="2"/><rect x="2" y="2" width="2" height="2"/><rect x="6" y="2" width="2" height="2"/><rect x="3" y="3" width="4" height="2"/><rect x="4" y="4" width="2" height="2"/></g></svg></div><div class="c c3 m"><span class="t">TEXT10</span><i class="u" style="width:42px"></i></div><div class="c c4 m"><span class="t">CHAR</span></div><div class="c c5 n">10</div><div class="c c6 n">0</div><div class="c c7 s" style="letter-spacing:0.389px">Text (10 Characters)</div>
</div>
<div class="row" style="top:558px">
<div class="c c0"></div><div class="c c1 m"><span class="t">SCNRID</span><i class="u" style="width:42px"></i></div><div class="c c2 m"><span class="t">Types</span><svg class="chev" width="10" height="8" viewBox="0 0 10 8" shape-rendering="crispEdges"><g fill="#fff" fill-opacity="0.8"><rect x="0" y="0" width="4" height="4"/><rect x="6" y="0" width="4" height="4"/><rect x="1" y="1" width="4" height="4"/><rect x="5" y="1" width="4" height="4"/><rect x="2" y="2" width="6" height="4"/><rect x="3" y="3" width="4" height="4"/></g><g fill="#505050"><rect x="1" y="1" width="2" height="2"/><rect x="7" y="1" width="2" height="2"/><rect x="2" y="2" width="2" height="2"/><rect x="6" y="2" width="2" height="2"/><rect x="3" y="3" width="4" height="2"/><rect x="4" y="4" width="2" height="2"/></g></svg></div><div class="c c3 m"><span class="t">/INT4/IFTT_DT_S<span class="ell">…</span></span><i class="u" style="width:105px"></i></div><div class="c c4 m"><span class="t">NUMC</span></div><div class="c c5 n">10</div><div class="c c6 n">0</div><div class="c c7 s" style="letter-spacing:0.226px">IFTT: Scenario ID</div>
</div>
<div class="row" style="top:579px">
<div class="c c0"></div><div class="c c1 m"><span class="t">IFTYPE_TEXT</span><i class="u" style="width:77px"></i></div><div class="c c2 m"><span class="t">Types</span><svg class="chev" width="10" height="8" viewBox="0 0 10 8" shape-rendering="crispEdges"><g fill="#fff" fill-opacity="0.8"><rect x="0" y="0" width="4" height="4"/><rect x="6" y="0" width="4" height="4"/><rect x="1" y="1" width="4" height="4"/><rect x="5" y="1" width="4" height="4"/><rect x="2" y="2" width="6" height="4"/><rect x="3" y="3" width="4" height="4"/></g><g fill="#505050"><rect x="1" y="1" width="2" height="2"/><rect x="7" y="1" width="2" height="2"/><rect x="2" y="2" width="2" height="2"/><rect x="6" y="2" width="2" height="2"/><rect x="3" y="3" width="4" height="2"/><rect x="4" y="4" width="2" height="2"/></g></svg></div><div class="c c3 m"><span class="t">/INT4/IFTT_DT_T<span class="ell">…</span></span><i class="u" style="width:105px"></i></div><div class="c c4 m"><span class="t">CHAR</span></div><div class="c c5 n">20</div><div class="c c6 n">0</div><div class="c c7 s" style="letter-spacing:0.282px">IFTT: Short Description</div>
</div>
<div class="row" style="top:600px">
<div class="c c0"></div><div class="c c1 m"><span class="t">OBJDESCR</span><i class="u" style="width:56px"></i></div><div class="c c2 m"><span class="t">Types</span><svg class="chev" width="10" height="8" viewBox="0 0 10 8" shape-rendering="crispEdges"><g fill="#fff" fill-opacity="0.8"><rect x="0" y="0" width="4" height="4"/><rect x="6" y="0" width="4" height="4"/><rect x="1" y="1" width="4" height="4"/><rect x="5" y="1" width="4" height="4"/><rect x="2" y="2" width="6" height="4"/><rect x="3" y="3" width="4" height="4"/></g><g fill="#505050"><rect x="1" y="1" width="2" height="2"/><rect x="7" y="1" width="2" height="2"/><rect x="2" y="2" width="2" height="2"/><rect x="6" y="2" width="2" height="2"/><rect x="3" y="3" width="4" height="2"/><rect x="4" y="4" width="2" height="2"/></g></svg></div><div class="c c3 m"><span class="t">/INT4/IFTT_DT_D<span class="ell">…</span></span><i class="u" style="width:105px"></i></div><div class="c c4 m"><span class="t">CHAR</span></div><div class="c c5 n">70</div><div class="c c6 n">0</div><div class="c c7 s" style="letter-spacing:0.251px">IFTT: Description</div>
</div>
<div class="row" style="top:621px">
<div class="c c0"></div><div class="c c1 m"><span class="t">LANDSCAPE_DESCR</span><i class="u" style="width:105px"></i></div><div class="c c2 m"><span class="t">Types</span><svg class="chev" width="10" height="8" viewBox="0 0 10 8" shape-rendering="crispEdges"><g fill="#fff" fill-opacity="0.8"><rect x="0" y="0" width="4" height="4"/><rect x="6" y="0" width="4" height="4"/><rect x="1" y="1" width="4" height="4"/><rect x="5" y="1" width="4" height="4"/><rect x="2" y="2" width="6" height="4"/><rect x="3" y="3" width="4" height="4"/></g><g fill="#505050"><rect x="1" y="1" width="2" height="2"/><rect x="7" y="1" width="2" height="2"/><rect x="2" y="2" width="2" height="2"/><rect x="6" y="2" width="2" height="2"/><rect x="3" y="3" width="4" height="2"/><rect x="4" y="4" width="2" height="2"/></g></svg></div><div class="c c3 m"><span class="t">/INT4/IFTT_DT_L<span class="ell">…</span></span><i class="u" style="width:105px"></i></div><div class="c c4 m"><span class="t">CHAR</span></div><div class="c c5 n">40</div><div class="c c6 n">0</div><div class="c c7 s" style="letter-spacing:0.022px">System Landscape Description</div>
</div>
<div class="row" style="top:642px">
<div class="c c0"></div><div class="c c1 m"><span class="t">MIDDLEWARE_META<span class="ell">…</span></span><i class="u" style="width:105px"></i></div><div class="c c2 m"><span class="t">Types</span><svg class="chev" width="10" height="8" viewBox="0 0 10 8" shape-rendering="crispEdges"><g fill="#fff" fill-opacity="0.8"><rect x="0" y="0" width="4" height="4"/><rect x="6" y="0" width="4" height="4"/><rect x="1" y="1" width="4" height="4"/><rect x="5" y="1" width="4" height="4"/><rect x="2" y="2" width="6" height="4"/><rect x="3" y="3" width="4" height="4"/></g><g fill="#505050"><rect x="1" y="1" width="2" height="2"/><rect x="7" y="1" width="2" height="2"/><rect x="2" y="2" width="2" height="2"/><rect x="6" y="2" width="2" height="2"/><rect x="3" y="3" width="4" height="2"/><rect x="4" y="4" width="2" height="2"/></g></svg></div><div class="c c3 m"><span class="t">/INT4/IFTT_ST_M<span class="ell">…</span></span><i class="u" style="width:105px"></i></div><div class="c c4 m"><svg class="ic" width="15" height="5" viewBox="0 0 15 5" shape-rendering="crispEdges"><rect x="0" y="0" width="15" height="5" fill="#555"/><rect x="1" y="1" width="4" height="4" fill="#0a96e0"/><rect x="5" y="1" width="1" height="4" fill="#1a6a80"/><rect x="6" y="1" width="4" height="4" fill="#0a96e0"/><rect x="10" y="1" width="3" height="4" fill="#fff"/><rect x="13" y="1" width="1" height="4" fill="#e8c890"/><rect x="14" y="0" width="1" height="5" fill="#3a7ac8"/></svg></div><div class="c c5 n">0</div><div class="c c6 n">0</div><div class="c c7 s" style="letter-spacing:-0.048px">IFTT Message Details</div>
</div>
<div class="row" style="top:663px">
<div class="c c0"></div><div class="c c1 m"><span class="t">MESSAGES</span><i class="u" style="width:56px"></i></div><div class="c c2 m"><span class="t">Types</span><svg class="chev" width="10" height="8" viewBox="0 0 10 8" shape-rendering="crispEdges"><g fill="#fff" fill-opacity="0.8"><rect x="0" y="0" width="4" height="4"/><rect x="6" y="0" width="4" height="4"/><rect x="1" y="1" width="4" height="4"/><rect x="5" y="1" width="4" height="4"/><rect x="2" y="2" width="6" height="4"/><rect x="3" y="3" width="4" height="4"/></g><g fill="#505050"><rect x="1" y="1" width="2" height="2"/><rect x="7" y="1" width="2" height="2"/><rect x="2" y="2" width="2" height="2"/><rect x="6" y="2" width="2" height="2"/><rect x="3" y="3" width="4" height="2"/><rect x="4" y="4" width="2" height="2"/></g></svg></div><div class="c c3 m"><span class="t">/INT4/IFTT_TT_M<span class="ell">…</span></span><i class="u" style="width:105px"></i></div><div class="c c4 m"><svg class="ict" width="15" height="15" viewBox="0 0 15 15" shape-rendering="crispEdges"><rect x="0" y="0" width="15" height="15" fill="#555"/><rect x="1" y="1" width="13" height="13" fill="#fff"/><rect x="2" y="2" width="3" height="2" fill="#0a96e0"/><rect x="2" y="5" width="3" height="8" fill="#0a96e0"/><rect x="6" y="2" width="3" height="2" fill="#5a4444"/><rect x="6" y="5" width="3" height="8" fill="#5a4444"/><rect x="10" y="2" width="3" height="2" fill="#505050"/><rect x="10" y="5" width="3" height="8" fill="#505050"/></svg></div><div class="c c5 n">0</div><div class="c c6 n">0</div><div class="c c7 s" style="letter-spacing:-0.092px">IFTT Messages</div>
</div>
<div class="row" style="top:684px">
<div class="c c0"></div><div class="c c1 m"><span class="t">DB_COMPARE_RESU<span class="ell">…</span></span><i class="u" style="width:105px"></i></div><div class="c c2 m"><span class="t">Types</span><svg class="chev" width="10" height="8" viewBox="0 0 10 8" shape-rendering="crispEdges"><g fill="#fff" fill-opacity="0.8"><rect x="0" y="0" width="4" height="4"/><rect x="6" y="0" width="4" height="4"/><rect x="1" y="1" width="4" height="4"/><rect x="5" y="1" width="4" height="4"/><rect x="2" y="2" width="6" height="4"/><rect x="3" y="3" width="4" height="4"/></g><g fill="#505050"><rect x="1" y="1" width="2" height="2"/><rect x="7" y="1" width="2" height="2"/><rect x="2" y="2" width="2" height="2"/><rect x="6" y="2" width="2" height="2"/><rect x="3" y="3" width="4" height="2"/><rect x="4" y="4" width="2" height="2"/></g></svg></div><div class="c c3 m"><span class="t">/INT4/IFTT_TT_T<span class="ell">…</span></span><i class="u" style="width:105px"></i></div><div class="c c4 m"><svg class="ict" width="15" height="15" viewBox="0 0 15 15" shape-rendering="crispEdges"><rect x="0" y="0" width="15" height="15" fill="#555"/><rect x="1" y="1" width="13" height="13" fill="#fff"/><rect x="2" y="2" width="3" height="2" fill="#0a96e0"/><rect x="2" y="5" width="3" height="8" fill="#0a96e0"/><rect x="6" y="2" width="3" height="2" fill="#5a4444"/><rect x="6" y="5" width="3" height="8" fill="#5a4444"/><rect x="10" y="2" width="3" height="2" fill="#505050"/><rect x="10" y="5" width="3" height="8" fill="#505050"/></svg></div><div class="c c5 n">0</div><div class="c c6 n">0</div><div class="c c7 s" style="letter-spacing:0.047px">IFTT Db Comp Results</div>
</div>
<div class="row" style="top:705px">
<div class="c c0"></div><div class="c c1 m"><span class="t">XML_COMPARE_RES<span class="ell">…</span></span><i class="u" style="width:105px"></i></div><div class="c c2 m"><span class="t">Types</span><svg class="chev" width="10" height="8" viewBox="0 0 10 8" shape-rendering="crispEdges"><g fill="#fff" fill-opacity="0.8"><rect x="0" y="0" width="4" height="4"/><rect x="6" y="0" width="4" height="4"/><rect x="1" y="1" width="4" height="4"/><rect x="5" y="1" width="4" height="4"/><rect x="2" y="2" width="6" height="4"/><rect x="3" y="3" width="4" height="4"/></g><g fill="#505050"><rect x="1" y="1" width="2" height="2"/><rect x="7" y="1" width="2" height="2"/><rect x="2" y="2" width="2" height="2"/><rect x="6" y="2" width="2" height="2"/><rect x="3" y="3" width="4" height="2"/><rect x="4" y="4" width="2" height="2"/></g></svg></div><div class="c c3 m"><span class="t">/INT4/IFTT_TT_T<span class="ell">…</span></span><i class="u" style="width:105px"></i></div><div class="c c4 m"><svg class="ict" width="15" height="15" viewBox="0 0 15 15" shape-rendering="crispEdges"><rect x="0" y="0" width="15" height="15" fill="#555"/><rect x="1" y="1" width="13" height="13" fill="#fff"/><rect x="2" y="2" width="3" height="2" fill="#0a96e0"/><rect x="2" y="5" width="3" height="8" fill="#0a96e0"/><rect x="6" y="2" width="3" height="2" fill="#5a4444"/><rect x="6" y="5" width="3" height="8" fill="#5a4444"/><rect x="10" y="2" width="3" height="2" fill="#505050"/><rect x="10" y="5" width="3" height="8" fill="#505050"/></svg></div><div class="c c5 n">0</div><div class="c c6 n">0</div><div class="c c7 s" style="letter-spacing:0.072px">IFTT XML Comp Results Aggregation</div>
</div>
<div class="row" style="top:726px">
<div class="c c0"></div><div class="c c1 m"><span class="t">FILE_COMPARE_RE<span class="ell">…</span></span><i class="u" style="width:105px"></i></div><div class="c c2 m"><span class="t">Types</span><svg class="chev" width="10" height="8" viewBox="0 0 10 8" shape-rendering="crispEdges"><g fill="#fff" fill-opacity="0.8"><rect x="0" y="0" width="4" height="4"/><rect x="6" y="0" width="4" height="4"/><rect x="1" y="1" width="4" height="4"/><rect x="5" y="1" width="4" height="4"/><rect x="2" y="2" width="6" height="4"/><rect x="3" y="3" width="4" height="4"/></g><g fill="#505050"><rect x="1" y="1" width="2" height="2"/><rect x="7" y="1" width="2" height="2"/><rect x="2" y="2" width="2" height="2"/><rect x="6" y="2" width="2" height="2"/><rect x="3" y="3" width="4" height="2"/><rect x="4" y="4" width="2" height="2"/></g></svg></div><div class="c c3 m"><span class="t">/INT4/IFTT_TT_T<span class="ell">…</span></span><i class="u" style="width:105px"></i></div><div class="c c4 m"><svg class="ict" width="15" height="15" viewBox="0 0 15 15" shape-rendering="crispEdges"><rect x="0" y="0" width="15" height="15" fill="#555"/><rect x="1" y="1" width="13" height="13" fill="#fff"/><rect x="2" y="2" width="3" height="2" fill="#0a96e0"/><rect x="2" y="5" width="3" height="8" fill="#0a96e0"/><rect x="6" y="2" width="3" height="2" fill="#5a4444"/><rect x="6" y="5" width="3" height="8" fill="#5a4444"/><rect x="10" y="2" width="3" height="2" fill="#505050"/><rect x="10" y="5" width="3" height="8" fill="#505050"/></svg></div><div class="c c5 n">0</div><div class="c c6 n">0</div><div class="c c7 s" style="letter-spacing:0.064px">IFTT File Comp Results Aggregation</div>
</div>
<div class="row" style="top:747px">
<div class="c c0"></div><div class="c c1 m"><span class="t">VARIABLES</span><i class="u" style="width:63px"></i></div><div class="c c2 m"><span class="t">Types</span><svg class="chev" width="10" height="8" viewBox="0 0 10 8" shape-rendering="crispEdges"><g fill="#fff" fill-opacity="0.8"><rect x="0" y="0" width="4" height="4"/><rect x="6" y="0" width="4" height="4"/><rect x="1" y="1" width="4" height="4"/><rect x="5" y="1" width="4" height="4"/><rect x="2" y="2" width="6" height="4"/><rect x="3" y="3" width="4" height="4"/></g><g fill="#505050"><rect x="1" y="1" width="2" height="2"/><rect x="7" y="1" width="2" height="2"/><rect x="2" y="2" width="2" height="2"/><rect x="6" y="2" width="2" height="2"/><rect x="3" y="3" width="4" height="2"/><rect x="4" y="4" width="2" height="2"/></g></svg></div><div class="c c3 m"><span class="t">/INT4/IFTT_TT_V<span class="ell">…</span></span><i class="u" style="width:105px"></i></div><div class="c c4 m"><svg class="ict" width="15" height="15" viewBox="0 0 15 15" shape-rendering="crispEdges"><rect x="0" y="0" width="15" height="15" fill="#555"/><rect x="1" y="1" width="13" height="13" fill="#fff"/><rect x="2" y="2" width="3" height="2" fill="#0a96e0"/><rect x="2" y="5" width="3" height="8" fill="#0a96e0"/><rect x="6" y="2" width="3" height="2" fill="#5a4444"/><rect x="6" y="5" width="3" height="8" fill="#5a4444"/><rect x="10" y="2" width="3" height="2" fill="#505050"/><rect x="10" y="5" width="3" height="8" fill="#505050"/></svg></div><div class="c c5 n">0</div><div class="c c6 n">0</div><div class="c c7 s" style="letter-spacing:0.062px">IFTT Variables</div>
</div>
<div class="row" style="top:768px"><div class="c c0"></div><div class="c c1"></div><div class="c c2"></div><div class="c c3"></div><div class="c c4"></div><div class="c c5"></div><div class="c c6"></div><div class="c c7"></div></div>
</body></html>
